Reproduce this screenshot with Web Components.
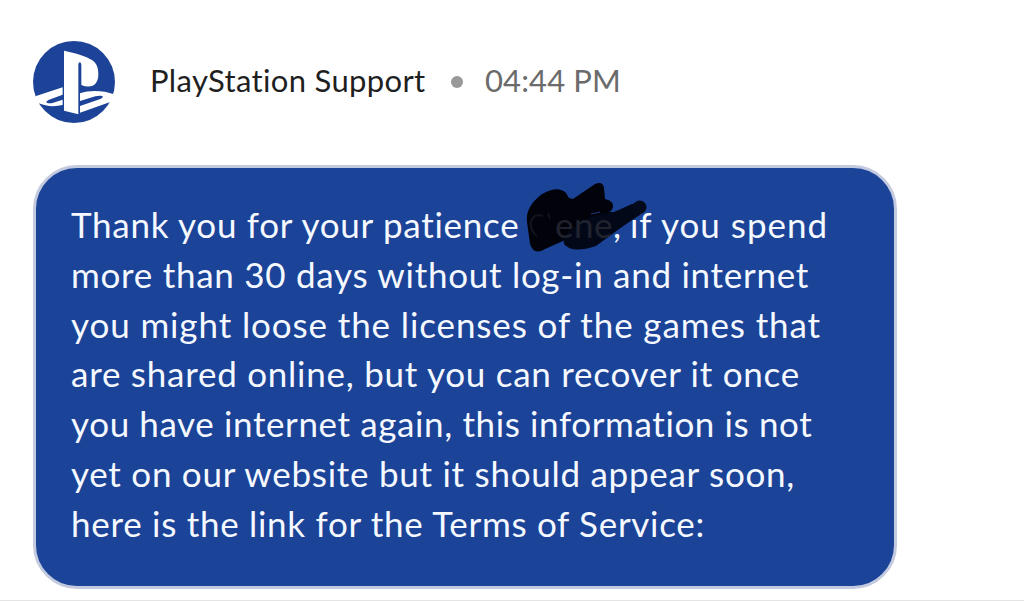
<!DOCTYPE html>
<html lang="en">
<head>
<meta charset="utf-8">
<title>PlayStation Support</title>
<style>
  body {
    margin: 0;
    background: #fff;
    font-family: Lato, "Liberation Sans", sans-serif;
  }
</style>
</head>
<body>
<chat-thread>
  <chat-header slot="header">
    <support-avatar slot="avatar"></support-avatar>
    <fit-text slot="name" width="276">PlayStation Support</fit-text>
    <fit-text slot="time" width="136">04:44 PM</fit-text>
  </chat-header>
  <chat-bubble>
    <bubble-line>
      <fit-text width="449">Thank you for your patience</fit-text>
      <hidden-name><fit-text width="58">ene</fit-text></hidden-name>
      <fit-text width="8">,</fit-text>
      <fit-text width="198" style="margin-left: 9px">if you spend</fit-text>
    </bubble-line>
    <bubble-line><fit-text width="738">more than 30 days without log-in and internet</fit-text></bubble-line>
    <bubble-line><fit-text width="750">you might loose the licenses of the games that</fit-text></bubble-line>
    <bubble-line><fit-text width="729">are shared online, but you can recover it once</fit-text></bubble-line>
    <bubble-line><fit-text width="742">you have internet again, this information is not</fit-text></bubble-line>
    <bubble-line><fit-text width="724">yet on our website but it should appear soon,</fit-text></bubble-line>
    <bubble-line><fit-text width="634">here is the link for the Terms of Service:</fit-text></bubble-line>
  </chat-bubble>
</chat-thread>

<script>
/**
 * Creates a template from a string of markup.
 */
function html (markup) {
  const template = document.createElement('template')
  template.innerHTML = markup
  return template
}

/**
 * Base class, clones the template into an open shadow root.
 */
class BaseElement extends HTMLElement {
  constructor () {
    super()
    this.attachShadow({ mode: 'open' })
      .appendChild(this.constructor.template.content.cloneNode(true))
  }
}

/**
 * The page, with the rule under the last message.
 */
class ChatThread extends BaseElement {
  static template = html(`
    <style>
      :host {
        display: flex;
        flex-direction: column;
        align-items: flex-start;
        box-sizing: border-box;
        height: 601px;
        padding: 41px 33px 0;
        border-bottom: 1px solid #e4e4e4;
        overflow: hidden;
      }
    </style>
    <slot name="header"></slot>
    <slot></slot>
  `)
}

/**
 * Avatar, sender and time.
 */
class ChatHeader extends BaseElement {
  static template = html(`
    <style>
      :host {
        display: flex;
        align-items: center;
        height: 82px;
        font-size: 31px;
        color: #1f1f1f;
      }
      .name {
        margin: -4px 0 0 35px;
      }
      .dot {
        width: 12px;
        height: 12px;
        margin: 0 22px 0 25px;
        border-radius: 50%;
        background: #999;
      }
      .time {
        margin-top: -4px;
        color: #6b6b6b;
      }
    </style>
    <slot name="avatar"></slot>
    <div class="name"><slot name="name"></slot></div>
    <div class="dot"></div>
    <div class="time"><slot name="time"></slot></div>
  `)
}

class SupportAvatar extends BaseElement {
  static template = html(`
    <style>
      :host {
        display: block;
        width: 82px;
        height: 82px;
      }
      svg {
        display: block;
      }
    </style>
    <svg width="82" height="82" viewBox="27 27 246 246">
      <circle cx="150" cy="150" r="123" fill="#1c4397"/>
      <g fill="#fff">
        <path d="M120 56C155 63 188 73 205 85C219 95 223 109 223 127C223 158 204 172 172 159V100C172 88 163 88 163 99V247L120 236Z"/>
        <path d="M116 166V188L75 203C58 211 72 217 88 212L116 203V219C90 225 66 223 42 213C37 206 35 200 34 193Z"/>
        <path d="M168 184C200 173 240 176 270 187C270 195 268 201 265 208L168 242V222L229 201C246 193 232 189 214 193L168 207Z"/>
      </g>
    </svg>
  `)
}

class ChatBubble extends BaseElement {
  static template = html(`
    <style>
      :host {
        display: block;
        box-sizing: border-box;
        width: 864px;
        height: 424px;
        margin-top: 42px;
        padding: 32px 34px 0 35px;
        border: 3px solid #c3cae0;
        border-radius: 44px;
        background: #1b4397;
        color: #f5f9ff;
        font-size: 35px;
      }
    </style>
    <slot></slot>
  `)
}

class BubbleLine extends BaseElement {
  static template = html(`
    <style>
      :host {
        display: flex;
        height: 49.8px;
        line-height: 49.8px;
      }
    </style>
    <slot></slot>
  `)
}

/**
 * A name that is scribbled over, only its last letters show through.
 */
class HiddenName extends BaseElement {
  static template = html(`
    <style>
      :host {
        display: flex;
        position: relative;
        width: 93px;
        justify-content: flex-end;
        color: #20232e;
      }
      svg {
        position: absolute;
        left: 0;
        top: -26px;
      }
      slot {
        position: relative;
        z-index: 1;
        display: block;
      }
    </style>
    <svg width="140" height="84" viewBox="520 174 140 84">
      <path d="M574 241L590 240L640 207" fill="none" stroke="#040a1c" stroke-width="13" stroke-linecap="round" stroke-linejoin="round"/>
      <path fill="#030819" d="M592 211L614 212L632 204L634 218L596 246Q572 254 564 244L562 230Z"/>
      <path fill="#01020a" d="M527 222Q525 207 542 194Q558 185 566 193L569 198L573 199L595 184Q603 181 604 188L605 199Q614 201 613 207Q612 213 601 214L590 217L568 232L563 241L545 249Q534 256 530 244Z"/>
      <path d="M591 214L600 212" stroke="#1b3a80" stroke-width="1"/>
      <path d="M543 216Q533 213 531 222Q530 231 537 236M548 213L550 219" fill="none" stroke="#11141d" stroke-width="2"/>
    </svg>
    <slot></slot>
  `)
}

/**
 * One run of text, tracked so that it fills the given width.
 */
class FitText extends BaseElement {
  static template = html(`
    <style>
      :host {
        display: block;
        flex: none;
        white-space: nowrap;
      }
      span {
        display: inline-block;
      }
    </style>
    <span><slot></slot></span>
  `)

  connectedCallback () {
    const width = Number(this.getAttribute('width'))
    const span = this.shadowRoot.querySelector('span')
    const spacing = (width - span.getBoundingClientRect().width) / this.textContent.length

    span.style.letterSpacing = `${spacing}px`
    this.style.width = `${width}px`
  }
}

// fit-text measures itself, so it is defined after its parents.
customElements.define('chat-thread', ChatThread)
customElements.define('chat-header', ChatHeader)
customElements.define('support-avatar', SupportAvatar)
customElements.define('chat-bubble', ChatBubble)
customElements.define('bubble-line', BubbleLine)
customElements.define('hidden-name', HiddenName)
customElements.define('fit-text', FitText)
</script>
</body>
</html>
